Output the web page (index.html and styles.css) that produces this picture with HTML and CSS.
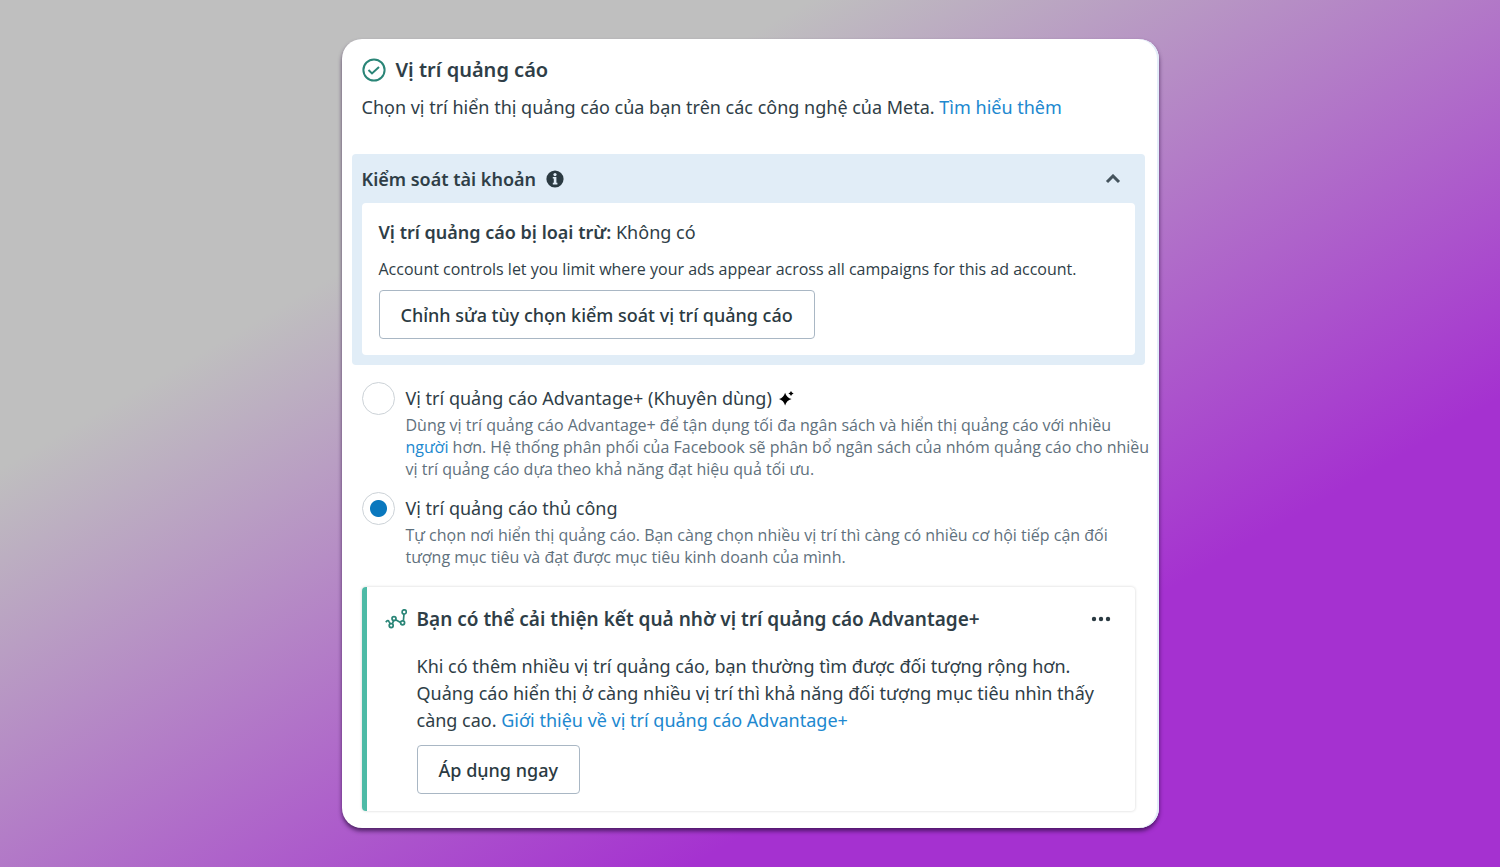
FILE: index.html
```
<!DOCTYPE html>
<html lang="vi">
<head>
<meta charset="utf-8">
<meta name="viewport" content="width=device-width, initial-scale=1">
<title>Vị trí quảng cáo</title>
<link rel="stylesheet" href="styles.css">
</head>
<body>
<main class="panel">
  <header class="intro">
    <h1 class="intro-title">
      <svg class="icon-check" viewBox="0 0 24 24" aria-hidden="true"><circle cx="12" cy="12" r="10.6"/><path d="M6.500 12l3.500 3.400L17 9"/></svg>
      Vị trí quảng cáo
    </h1>
    <p class="intro-text">Chọn vị trí hiển thị quảng cáo của bạn trên các công nghệ của Meta. <a class="link" href="#learn">Tìm hiểu thêm</a></p>
  </header>

  <section class="controls">
    <div class="controls-head">
      <h2 class="controls-title">Kiểm soát tài khoản</h2>
      <svg class="icon-info" viewBox="0 0 18 18" aria-hidden="true"><circle class="disc" cx="9" cy="9" r="8.6"/><circle class="mark" cx="9" cy="4.600" r="1.600"/><path class="mark" d="M6.800 7h3.600v5.800h1v1.600H6.800v-1.600h1V8.600h-1z"/></svg>
      <button class="icon-button toggle" type="button" aria-label="Thu gọn" aria-expanded="true">
        <svg class="icon-chevron" viewBox="0 0 16 10" aria-hidden="true"><path d="M2 8l6-6 6 6"/></svg>
      </button>
    </div>
    <div class="controls-body">
      <p class="excluded"><strong>Vị trí quảng cáo bị loại trừ:</strong> Không có</p>
      <p class="note">Account controls let you limit where your ads appear across all campaigns for this ad account.</p>
      <button class="button" type="button">Chỉnh sửa tùy chọn kiểm soát vị trí quảng cáo</button>
    </div>
  </section>

  <div class="options" role="radiogroup" aria-label="Vị trí quảng cáo">
    <div class="option">
      <input class="radio" type="radio" name="placement" id="auto">
      <div class="option-text">
        <label class="option-title" for="auto">Vị trí quảng cáo Advantage+ (Khuyên dùng)
          <svg class="icon-spark" viewBox="0 0 16 16" aria-hidden="true"><path d="M6.500 1.800Q8 7 13.400 8.600 8 10.200 6.500 15.400 5 10.200 0 8.600 5 7 6.500 1.800z"/><path d="M12.800 0Q13.400 2 15.600 2.700 13.400 3.400 12.800 5.400 12.200 3.400 10 2.700 12.200 2 12.800 0z"/></svg>
        </label>
        <p class="option-desc">Dùng vị trí quảng cáo Advantage+ để tận dụng tối đa ngân sách và hiển thị quảng cáo với nhiều <a class="link" href="#people">người</a> hơn. Hệ thống phân phối của Facebook sẽ phân bổ ngân sách của nhóm quảng cáo cho nhiều vị trí quảng cáo dựa theo khả năng đạt hiệu quả tối ưu.</p>
      </div>
    </div>
    <div class="option">
      <input class="radio" type="radio" name="placement" id="manual" checked>
      <div class="option-text">
        <label class="option-title" for="manual">Vị trí quảng cáo thủ công</label>
        <p class="option-desc">Tự chọn nơi hiển thị quảng cáo. Bạn càng chọn nhiều vị trí thì càng có nhiều cơ hội tiếp cận đối tượng mục tiêu và đạt được mục tiêu kinh doanh của mình.</p>
      </div>
    </div>
  </div>

  <section class="tip">
    <svg class="icon-trend" viewBox="0 0 22 20" aria-hidden="true"><path d="M0.800 13.200Q3 10.400 4 12.600L5.400 15M7.400 14.600L8.600 11.600M10.600 10.800L15.600 13.400M18.400 11.800L19 5"/><circle cx="6.200" cy="16.600" r="2"/><circle cx="9" cy="9.600" r="2"/><circle cx="17.600" cy="13.800" r="2"/><circle cx="19.200" cy="2.900" r="2.100"/></svg>
    <div class="tip-content">
      <div class="tip-head">
        <h2 class="tip-title">Bạn có thể cải thiện kết quả nhờ vị trí quảng cáo Advantage+</h2>
        <button class="icon-button" type="button" aria-label="Tùy chọn khác">
          <svg class="icon-dots" viewBox="0 0 20 6" aria-hidden="true"><circle cx="3" cy="3" r="2.200"/><circle cx="10" cy="3" r="2.200"/><circle cx="17" cy="3" r="2.200"/></svg>
        </button>
      </div>
      <p class="tip-text">Khi có thêm nhiều vị trí quảng cáo, bạn thường tìm được đối tượng rộng hơn. Quảng cáo hiển thị ở càng nhiều vị trí thì khả năng đối tượng mục tiêu nhìn thấy càng cao. <a class="link" href="#about">Giới thiệu về vị trí quảng cáo Advantage+</a></p>
      <button class="button" type="button">Áp dụng ngay</button>
    </div>
  </section>
</main>
</body>
</html>
```
FILE: styles.css
```
* {
  box-sizing: border-box;
}

body {
  margin: 0;
  min-height: 100vh;
  display: flex;
  justify-content: center;
  align-items: center;
  padding: 16px;
  background: linear-gradient(to bottom right, #bfbfbf 27%, #a531d0 73%);
  color: #2f3e47;
  font-family: "Noto Sans", sans-serif;
  font-size: 18px;
  line-height: 28px;
}

h1,
h2,
p {
  margin: 0;
}

.panel {
  width: 100%;
  max-width: 817px;
  padding: 16px 24px 17px 20px;
  border-radius: 20px;
  background: #fff;
  box-shadow: 0 3px 4px rgba(40, 10, 60, 0.7), inset -2px 0 0 #e3ecf9;
}

.link {
  color: #2088cf;
  text-decoration: none;
}

.intro-title {
  display: flex;
  align-items: center;
  gap: 10px;
  font-size: 20px;
  font-weight: 600;
  line-height: 30px;
}

.intro-text {
  margin-top: 8px;
}

.icon-check {
  width: 24px;
  height: 24px;
  fill: none;
  stroke: #2a8577;
  stroke-width: 2;
}

.controls {
  margin: 33px -10px 0;
  padding: 0 10px 10px;
  border-radius: 4px;
  background: #e1edf7;
}

.controls-head {
  display: flex;
  align-items: center;
  gap: 10px;
  height: 49px;
}

.controls-title {
  font-size: 18px;
  font-weight: 600;
}

.icon-info {
  width: 18px;
  height: 18px;
}

.icon-info .disc {
  fill: #2b3a42;
}

.icon-info .mark {
  fill: #e1edf7;
}

.icon-button {
  display: flex;
  padding: 4px;
  border: 0;
  background: none;
  cursor: pointer;
}

.toggle {
  margin-left: auto;
  margin-right: 10px;
}

.icon-chevron {
  width: 16px;
  height: 10px;
  fill: none;
  stroke: #45545d;
  stroke-width: 3;
}

.controls-body {
  padding: 15px 17px 16px;
  border-radius: 4px;
  background: #fff;
}

.excluded strong {
  font-weight: 600;
}

.note {
  margin: 11px 0 9px;
  font-family: "Open Sans", "Noto Sans", sans-serif;
  font-size: 16px;
  line-height: 24px;
}

.button {
  height: 49px;
  padding: 0 21px;
  border: 1px solid #a9b7c4;
  border-radius: 4px;
  background: #fff;
  color: #2b3a42;
  font: 500 18px/28px "Noto Sans", sans-serif;
  cursor: pointer;
}

.options {
  display: grid;
  gap: 12px;
  margin-top: 17px;
  margin-right: -16px;
}

.option {
  display: flex;
  gap: 11px;
}

.radio {
  flex: none;
  appearance: none;
  width: 33px;
  height: 33px;
  margin: 0;
  border: 1px solid #ccd2d7;
  border-radius: 50%;
  background: #fff;
}

.radio:checked {
  background: radial-gradient(circle, #0a78be 8px, #fff 9px);
}

.option-title {
  display: flex;
  align-items: center;
  gap: 7px;
  height: 32px;
}

.icon-spark {
  width: 15px;
  height: 15px;
}

.option-desc {
  color: #5f717d;
  font-family: "Open Sans", "Noto Sans", sans-serif;
  font-size: 16px;
  line-height: 22px;
}

.tip {
  display: flex;
  gap: 10px;
  margin-top: 19px;
  padding: 18px 20px 17px 18px;
  border-left: 5px solid #4dbaa6;
  border-radius: 4px;
  box-shadow: 0 0 3px rgba(0, 0, 0, 0.18);
}

.icon-trend {
  flex: none;
  width: 22px;
  height: 20px;
  margin-top: 4px;
  fill: none;
  stroke: #2a8577;
  stroke-width: 1.700;
}

.tip-content {
  flex: 1;
}

.tip-head {
  display: flex;
  align-items: center;
  justify-content: space-between;
}

.tip-title {
  font-size: 19px;
  font-weight: 600;
  line-height: 28px;
}

.icon-dots {
  width: 20px;
  height: 6px;
  fill: #2b3a42;
}

.tip-text {
  margin: 20px 0 11px;
  line-height: 27px;
}
```
